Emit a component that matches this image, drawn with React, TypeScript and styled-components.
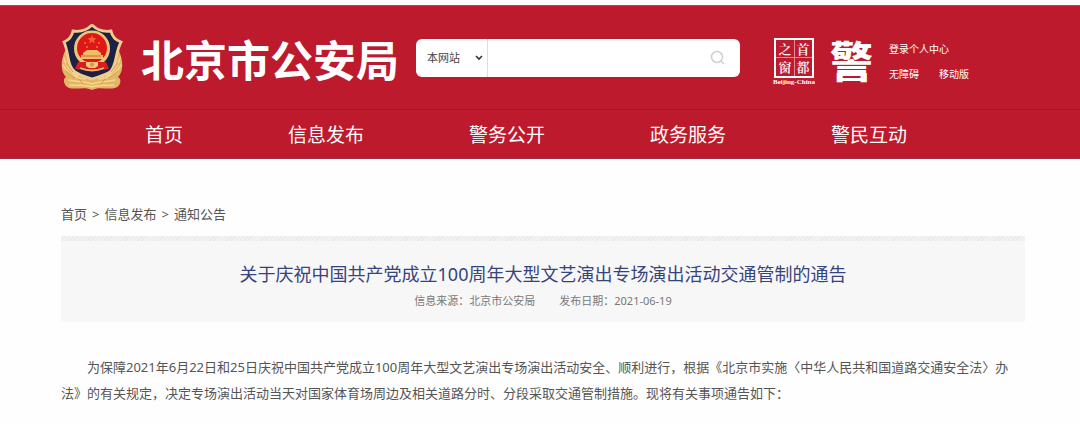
import React from "react";
import styled, { createGlobalStyle } from "styled-components";

const red = "#bd1a2d";
const sans = '"Noto Sans", "Noto Sans CJK SC", sans-serif';
const cjk = '"Noto Sans CJK SC", sans-serif';

const GlobalStyle = createGlobalStyle`
  * { box-sizing: border-box; }
  body { margin: 0; background: #fefefe; font-family: ${sans}; color: #555; }
  a { color: inherit; text-decoration: none; }
`;

const Header = styled.header`
  margin-top: 5px;
  background: ${red};
  border-top: 1px solid #b0445a;
  border-bottom: 1px solid #a03045;
  color: #fff;
`;

const Masthead = styled.div`
  display: flex;
  align-items: center;
  height: 103px;
  padding: 0 55px 0 61px;
`;

const Brand = styled.a`
  display: flex;
  align-items: center;
  gap: 17px;
  flex: none;
`;

const SiteName = styled.h1`
  margin: 0;
  font: 700 43px/60px ${cjk};
  white-space: nowrap;
`;

const Search = styled.form`
  display: flex;
  flex: 0 1 324px;
  height: 38px;
  margin-left: 17px;
  background: #fff;
  border-radius: 6px;
  overflow: hidden;
`;

const ScopeField = styled.label`
  display: flex;
  align-items: center;
  width: 72px;
  padding: 0 4px 0 11px;
  border-right: 1px solid #ddd;
  color: #444;
`;

const Scope = styled.select`
  appearance: none;
  flex: 1;
  min-width: 0;
  padding: 0;
  border: 0;
  background: transparent;
  color: #444;
  font: 11px/20px ${sans};
`;

const Query = styled.input`
  flex: 1;
  min-width: 0;
  padding: 0 12px;
  border: 0;
  background: transparent;
  font: 13px/20px ${sans};
`;

const SearchButton = styled.button`
  display: grid;
  place-items: center;
  width: 45px;
  padding: 0;
  border: 0;
  background: transparent;
`;

const Tools = styled.div`
  display: flex;
  align-items: center;
  padding-top: 8px;
  margin-left: 32px;
`;

const Partners = styled.div`
  display: flex;
  align-items: flex-start;
  gap: 14px;
`;

const Seal = styled.a`
  display: flex;
  flex-direction: column;
  align-items: center;
  width: 44px;
  font: 700 7px/8px "Liberation Serif", serif;
  white-space: nowrap;
`;

const SealGrid = styled.span`
  display: grid;
  grid-template-columns: 1fr 1fr;
  grid-template-rows: 1fr 1fr;
  width: 40px;
  height: 40px;
  border: 2px solid #fff;
  background: linear-gradient(#e58b95, #e58b95) center / 1px 100% no-repeat,
    linear-gradient(#e58b95, #e58b95) center / 100% 1px no-repeat;
`;

const SealCharacter = styled.span`
  font: 600 13px/18px "Noto Serif CJK SC", ${cjk};
  text-align: center;
`;

const PoliceMark = styled.a`
  display: block;
  font: 900 43px/42px ${cjk};
`;

const UserLinks = styled.nav`
  display: grid;
  grid-template-columns: auto auto;
  column-gap: 20px;
  row-gap: 5px;
  margin-left: 16px;
  font: 10px/20px ${cjk};
  white-space: nowrap;
`;

const WideLink = styled.a`
  grid-column: 1 / -1;
`;

const MainNav = styled.nav`
  border-top: 1px solid #a31629;
`;

const NavList = styled.ul`
  display: flex;
  gap: 105px;
  margin: 0;
  padding: 0 55px 0 145px;
  list-style: none;
  font: 19px/48px ${cjk};
  white-space: nowrap;
`;

const Main = styled.main`
  padding: 45px 55px 18px 61px;
`;

const Breadcrumb = styled.nav`
  display: flex;
  gap: 5px;
  font-size: 13px;
  line-height: 20px;
`;

const ArticleHead = styled.header`
  margin-top: 12px;
  padding: 22px 0 11px;
  background: repeating-linear-gradient(135deg, #e9e9e9 0 1px, #f2f2f2 1px 3px) top / 100% 5px
      no-repeat,
    #f7f7f7;
  text-align: center;
`;

const ArticleTitle = styled.h2`
  margin: 0;
  color: #37437c;
  font: 400 18px/33px ${sans};
`;

const Meta = styled.p`
  display: flex;
  justify-content: center;
  gap: 24px;
  margin: 0;
  color: #777;
  font-size: 11px;
  line-height: 20px;
`;

const Body = styled.p`
  margin: 32px 0 0;
  text-indent: 2em;
  font: 13px/26px ${sans};
`;

function Emblem() {
  return (
    <svg width="63" height="67" viewBox="0 0 63 67" aria-hidden="true">
      <path d="M4 27 C-1 38 0 48 5 53 C1 55 3 62 8 64 C16 66 24 62 31 66 C38 62 47 66 54 64 C60 62 61 55 57 53 C62 48 63 38 58 27 Z" fill="#e3b566" />
      <path d="M31 1 C26 6 19 8 12 7 C11 12 8 16 3 18 C8 29 6 42 14 48 C20 52 26 53 31 55 C36 53 43 52 49 48 C56 42 54 29 60 18 C54 16 51 12 50 7 C43 8 36 6 31 1Z" fill="#1d2143" stroke="#f1cd91" strokeWidth="2.8" />
      <g fill="none" stroke="#f8d58c" strokeWidth="1.6" strokeLinecap="round">
        <path d="M3 34 C5 42 9 48 17 52 M2 41 C6 49 13 54 24 55 M59 34 C57 42 53 48 45 52 M60 41 C56 49 49 54 38 55" />
        <path d="M8 56 C15 58 23 57 31 60 C39 57 47 58 54 56 M9 61 C17 62 24 60 31 63 C38 60 45 62 53 61" />
      </g>
      <path d="M5 39 L12 48 M5 47 L14 54 M57 39 L50 48 M57 47 L48 54 M18 55 L22 60 M44 55 L40 60" stroke="#c58e42" strokeWidth="0.8" />
      <circle cx="31" cy="24.5" r="18" fill="#ecc47c" />
      <circle cx="31" cy="24" r="15" fill="#df1719" />
      <path d="M31 11 L32.2 14.1 L35.5 14.3 L33 16.4 L33.8 19.5 L31 17.8 L28.2 19.5 L29 16.4 L26.5 14.3 L29.8 14.1Z" fill="#f5612e" />
      <path d="M23 18h2v2h-2z M25 22h2v2h-2z M35 22h2v2h-2z M37 18h2v2h-2z" fill="#f0602d" />
      <path d="M22 29 L26 26 H36 L40 29 V31 H42 V35 H20 V31 H22Z" fill="#f0be69" />
      <path d="M22 32 H40" stroke="#c9461f" strokeWidth="0.8" />
      <path d="M17 38 H45 L48 45 L40 46 H22 L14 45Z" fill="#d81d20" />
      <path d="M25 38 H37 V42 L34 44 H28 L25 42Z" fill="#f0c67c" />
      <circle cx="31" cy="40.5" r="2" fill="#d6973f" />
      <path d="M19 44 Q31 49 43 44" fill="none" stroke="#f2b764" strokeWidth="1.8" />
      <path d="M22 48 H40 L36 51 H26Z" fill="#1b2044" />
    </svg>
  );
}

const navItems = ["首页", "信息发布", "警务公开", "政务服务", "警民互动"];

export default function App() {
  return (
    <>
      <GlobalStyle />
      <Header lang="zh-CN">
        <Masthead>
          <Brand href="#">
            <Emblem />
            <SiteName>北京市公安局</SiteName>
          </Brand>
          <Search>
            <ScopeField>
              <Scope aria-label="搜索范围">
                <option>本网站</option>
              </Scope>
              <svg width="8" height="6" viewBox="0 0 8 6" aria-hidden="true">
                <path d="M1 1l3 3 3-3" fill="none" stroke="#333" strokeWidth="1.6" />
              </svg>
            </ScopeField>
            <Query type="text" aria-label="搜索" />
            <SearchButton type="submit" aria-label="搜索">
              <svg width="15" height="15" viewBox="0 0 15 15" fill="none" stroke="#cfcfcf" strokeWidth="1.5" aria-hidden="true">
                <circle cx="7" cy="7" r="5.5" />
                <path d="M11 11l3 3" />
              </svg>
            </SearchButton>
          </Search>
          <Tools>
            <Partners>
              <Seal href="#">
                <SealGrid>
                  <SealCharacter>之</SealCharacter>
                  <SealCharacter>首</SealCharacter>
                  <SealCharacter>窗</SealCharacter>
                  <SealCharacter>都</SealCharacter>
                </SealGrid>
                Beijing-China
              </Seal>
              <PoliceMark href="#">警</PoliceMark>
            </Partners>
            <UserLinks aria-label="用户">
              <WideLink href="#">登录个人中心</WideLink>
              <a href="#">无障碍</a>
              <a href="#">移动版</a>
            </UserLinks>
          </Tools>
        </Masthead>
        <MainNav>
          <NavList>
            {navItems.map((item) => (
              <li key={item}>
                <a href="#">{item}</a>
              </li>
            ))}
          </NavList>
        </MainNav>
      </Header>
      <Main lang="zh-CN">
        <Breadcrumb>
          <a href="#">首页</a>
          <span>&gt;</span>
          <a href="#">信息发布</a>
          <span>&gt;</span>
          <a href="#">通知公告</a>
        </Breadcrumb>
        <article>
          <ArticleHead>
            <ArticleTitle>关于庆祝中国共产党成立100周年大型文艺演出专场演出活动交通管制的通告</ArticleTitle>
            <Meta>
              <span>信息来源：北京市公安局</span>
              <span>发布日期：2021-06-19</span>
            </Meta>
          </ArticleHead>
          <Body>
            为保障2021年6月22日和25日庆祝中国共产党成立100周年大型文艺演出专场演出活动安全、顺利进行，根据《北京市实施〈中华人民共和国道路交通安全法〉办法》的有关规定，决定专场演出活动当天对国家体育场周边及相关道路分时、分段采取交通管制措施。现将有关事项通告如下：
          </Body>
        </article>
      </Main>
    </>
  );
}
